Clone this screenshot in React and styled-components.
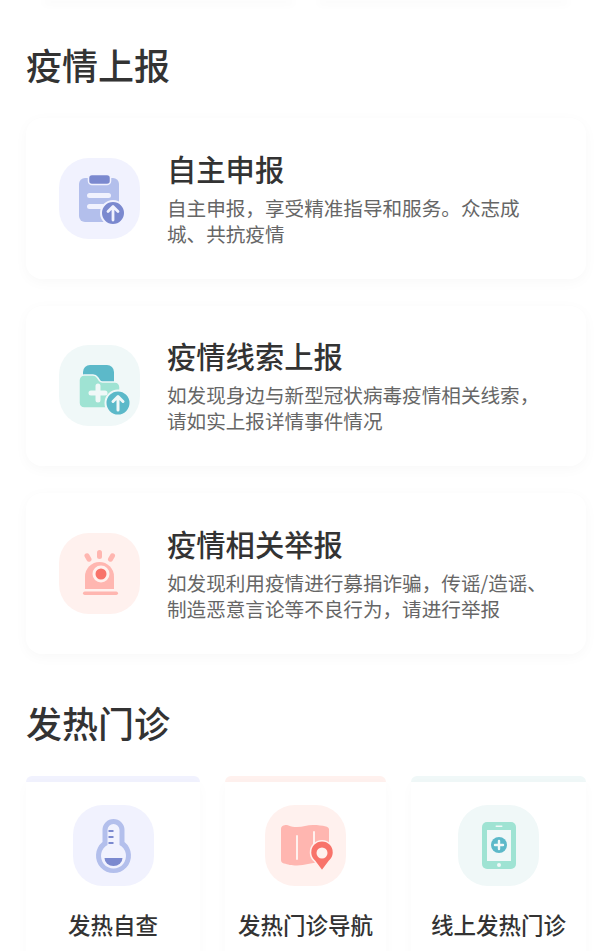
import React from 'react';
import styled, { createGlobalStyle } from 'styled-components';

const GlobalStyle = createGlobalStyle`
  html, body {
    margin: 0;
    padding: 0;
    background: #fff;
  }
`;

const Page = styled.div`
  width: 600px;
  height: 951px;
  overflow: hidden;
  box-sizing: border-box;
  padding: 0 14px 0 26px;
  background: #fff;
  font-family: "Noto Sans CJK SC", "Noto Sans", sans-serif;
`;

const PrevRow = styled.div`
  display: flex;
  gap: 30px;
  padding: 0 20px;
  height: 0;
`;

const PrevCard = styled.div`
  flex: 1;
  height: 0;
  box-shadow: 0 2px 8px 3px rgba(0, 0, 0, 0.025);
`;

const SectionTitle = styled.h2`
  margin: 0;
  padding-top: ${(p) => p.$top}px;
  height: 52px;
  font-size: 36px;
  line-height: 52px;
  font-weight: 500;
  color: #333;
`;

const ReportList = styled.div`
  display: flex;
  flex-direction: column;
  gap: 27px;
  margin-top: 28px;
`;

const ReportCard = styled.div`
  height: 160.5px;
  box-sizing: border-box;
  display: flex;
  align-items: center;
  gap: 27px;
  padding: 0 32px 0 33px;
  border-radius: 16px;
  background: #fff;
  box-shadow: 0 3px 14px rgba(0, 0, 0, 0.03);
`;

const IconTile = styled.div`
  flex: none;
  width: 81px;
  height: 81px;
  border-radius: 30px;
  background: ${(p) => p.$bg};

  svg {
    display: block;
  }
`;

const ReportText = styled.div`
  min-width: 0;
  display: flex;
  flex-direction: column;
  margin-top: -2px;
`;

const ReportTitle = styled.div`
  font-size: 29.3px;
  line-height: 40px;
  font-weight: 500;
  color: #333;
`;

const ReportDesc = styled.div`
  margin-top: 7px;
  font-size: 19.6px;
  line-height: 26px;
  color: #666;
`;

const ClinicGrid = styled.div`
  display: grid;
  grid-template-columns: 174px 161px 175px;
  column-gap: 25px;
  margin-top: 28px;
`;

const ClinicCard = styled.div`
  display: flex;
  flex-direction: column;
  align-items: center;
`;

const AccentStrip = styled.div`
  align-self: stretch;
  height: 6px;
  border-radius: 8px 8px 0 0;
  background: ${(p) => p.$accent};
`;

const ClinicBody = styled.div`
  align-self: stretch;
  height: 200px;
  margin-bottom: -40px;
  background: #fff;
  box-shadow: 0 3px 12px rgba(0, 0, 0, 0.025);
  display: flex;
  flex-direction: column;
  align-items: center;
  padding-top: 23px;
  box-sizing: border-box;
`;

const ClinicName = styled.div`
  margin-top: 21px;
  font-size: 22.5px;
  line-height: 34px;
  font-weight: 500;
  color: #333;
  white-space: nowrap;
`;

const INDIGO_LIGHT = '#b3bfec';
const INDIGO = '#7b89cf';
const INDIGO_BG = '#f1f2fe';
const TEAL_LIGHT = '#9fe3d3';
const TEAL = '#5cb9c9';
const TEAL_BG = '#f0f8f8';
const CORAL_LIGHT = '#ffb6b0';
const CORAL = '#f8736a';
const CORAL_BG = '#fff1ee';

// every icon is drawn in the 81x81 space of its tile
const Icon = ({ children }) => (
  <svg width="81" height="81" viewBox="0 0 81 81">{children}</svg>
);

const ClipboardIcon = () => (
  <Icon>
    <rect x="20" y="20" width="40" height="44" rx="6" fill={INDIGO_LIGHT} />
    <rect x="29.5" y="16.500" width="22" height="10" rx="3.500" fill={INDIGO} stroke={INDIGO_BG} strokeWidth="1.500" />
    <rect x="28" y="35" width="24" height="5" rx="2.500" fill={INDIGO_BG} />
    <rect x="28" y="46" width="18" height="5" rx="2.500" fill={INDIGO_BG} />
    <circle cx="54" cy="55" r="12" fill={INDIGO} stroke={INDIGO_BG} strokeWidth="2" />
    <path d="M54 62V49M49 53.500 54 48.500l5 5" fill="none" stroke={INDIGO_BG} strokeWidth="2.800" strokeLinecap="round" strokeLinejoin="round" />
  </Icon>
);

const FolderIcon = () => (
  <Icon>
    <path d="M24 27a7 7 0 0 1 7-7h17a7 7 0 0 1 7 7v10H24z" fill={TEAL} />
    <path d="M20 35a5 5 0 0 1 5-5h9c2.500 0 3.500 1 4.500 2.500l2 3c.7 1 1.500 1.500 3 1.500H56a5 5 0 0 1 5 5v16a5 5 0 0 1-5 5H25a5 5 0 0 1-5-5z" fill={TEAL_LIGHT} stroke={TEAL_BG} strokeWidth="1.500" />
    <path d="M32 48h14M39 41v14" stroke={TEAL_BG} strokeWidth="5" strokeLinecap="round" />
    <circle cx="59" cy="58" r="12.500" fill={TEAL} stroke={TEAL_BG} strokeWidth="2" />
    <path d="M59 65V52M54 56.500 59 51.500l5 5" fill="none" stroke={TEAL_BG} strokeWidth="3" strokeLinecap="round" strokeLinejoin="round" />
  </Icon>
);

const AlarmIcon = () => (
  <Icon>
    <rect x="26.500" y="20" width="5" height="9" rx="2.500" transform="rotate(-30 29 24.500)" fill={CORAL_LIGHT} />
    <rect x="38" y="17" width="5" height="9" rx="2.500" fill={CORAL_LIGHT} />
    <rect x="50" y="20" width="5" height="9" rx="2.500" transform="rotate(30 52.500 24.500)" fill={CORAL_LIGHT} />
    <path d="M26 56V43.500a14.500 14.500 0 0 1 29 0V56z" fill={CORAL_LIGHT} />
    <circle cx="42" cy="41" r="7" fill={CORAL} stroke={CORAL_BG} strokeWidth="3" />
    <rect x="24" y="58.500" width="35" height="3.500" rx="1.700" fill={CORAL_LIGHT} />
  </Icon>
);

const ThermometerIcon = () => (
  <Icon>
    <path d="M29.500 37V25a11 11 0 0 1 22 0v12a17.500 17.500 0 1 1-22 0z" fill={INDIGO_LIGHT} />
    <path d="M34.500 40V25a6 6 0 0 1 12 0v15a12.500 12.500 0 1 1-12 0z" fill={INDIGO_BG} />
    <path d="M31.500 53h18a9 8 0 0 1-18 0z" fill={INDIGO} />
    <path d="M35.500 26h5M35.500 32h5M35.500 38h5" stroke={INDIGO} strokeWidth="2.200" />
  </Icon>
);

const MapIcon = () => (
  <Icon>
    <path d="M16 24c0-2 1-3 2.500-3.500l2-.5c1 0 2 0 3 .5 2.500 1 5.500 1.500 8.500 1.500 6 0 10-2 16-2 5 0 9 .5 13 1.500 2 .5 3 1.500 3 3V56c-3 1-6 1.500-10 1.500-8 0-14 3-22 3-6 0-9-1-13-2-2-.5-3-1.500-3-3.500z" fill={CORAL_LIGHT} />
    <path d="M32 31v23M49 27v16" stroke={CORAL_BG} strokeWidth="2" strokeLinecap="round" />
    <path d="M57 66 49.500 56a11.500 11.500 0 1 1 15 0z" fill={CORAL} stroke={CORAL_BG} strokeWidth="1.500" strokeLinejoin="round" />
    <circle cx="57" cy="48" r="5.500" fill={CORAL_BG} />
  </Icon>
);

const PhoneIcon = () => (
  <Icon>
    <rect x="24" y="17" width="34" height="47" rx="5" fill={TEAL_LIGHT} />
    <rect x="29" y="25" width="24" height="31" fill={TEAL_BG} />
    <rect x="37.500" y="20.500" width="7" height="1.500" rx="0.750" fill={TEAL_BG} />
    <circle cx="41" cy="60" r="2" fill={TEAL_BG} />
    <circle cx="41" cy="40" r="8" fill={TEAL} />
    <path d="M37 40h8M41 36v8" stroke={TEAL_BG} strokeWidth="2.400" strokeLinecap="round" />
  </Icon>
);

const reports = [
  { title: '自主申报', desc: '自主申报，享受精准指导和服务。众志成城、共抗疫情', bg: INDIGO_BG, icon: <ClipboardIcon /> },
  { title: '疫情线索上报', desc: '如发现身边与新型冠状病毒疫情相关线索，请如实上报详情事件情况', bg: TEAL_BG, icon: <FolderIcon /> },
  { title: '疫情相关举报', desc: '如发现利用疫情进行募捐诈骗，传谣/造谣、制造恶意言论等不良行为，请进行举报', bg: CORAL_BG, icon: <AlarmIcon /> },
];

const clinics = [
  { name: '发热自查', bg: INDIGO_BG, icon: <ThermometerIcon /> },
  { name: '发热门诊导航', bg: CORAL_BG, icon: <MapIcon /> },
  { name: '线上发热门诊', bg: TEAL_BG, icon: <PhoneIcon /> },
];

const App = () => (
  <Page>
    <GlobalStyle />
    <PrevRow>
      <PrevCard />
      <PrevCard />
    </PrevRow>
    <SectionTitle $top={38}>疫情上报</SectionTitle>
    <ReportList>
      {reports.map((r) => (
        <ReportCard key={r.title}>
          <IconTile $bg={r.bg}>{r.icon}</IconTile>
          <ReportText>
            <ReportTitle>{r.title}</ReportTitle>
            <ReportDesc>{r.desc}</ReportDesc>
          </ReportText>
        </ReportCard>
      ))}
    </ReportList>
    <SectionTitle $top={42}>发热门诊</SectionTitle>
    <ClinicGrid>
      {clinics.map((c) => (
        <ClinicCard key={c.name}>
          <AccentStrip $accent={c.bg} />
          <ClinicBody>
            <IconTile $bg={c.bg}>{c.icon}</IconTile>
            <ClinicName>{c.name}</ClinicName>
          </ClinicBody>
        </ClinicCard>
      ))}
    </ClinicGrid>
  </Page>
);

export default App;
